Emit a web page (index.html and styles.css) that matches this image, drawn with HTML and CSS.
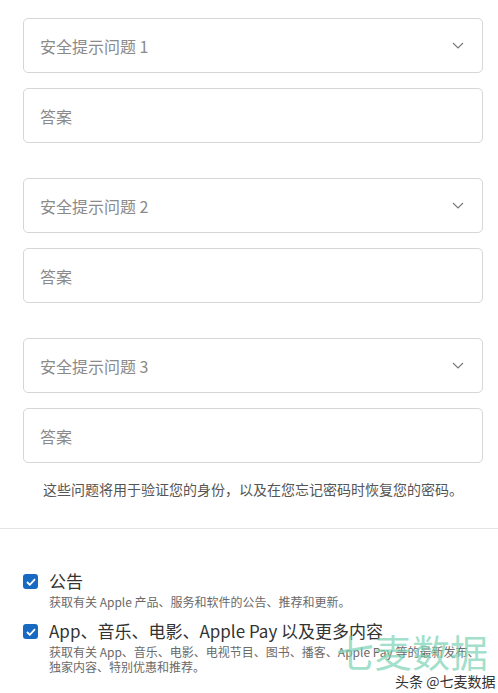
FILE: index.html
```html
<!DOCTYPE html>
<html lang="zh-CN">
<head>
<meta charset="utf-8">
<link rel="stylesheet" href="styles.css">
</head>
<body>
<div class="page">
  <section class="questions">
    <div class="group">
      <div class="field select"><span class="ph">安全提示问题 1</span><svg class="chev" width="12" height="7" viewBox="0 0 12 7"><path d="M1 1l5 5 5-5" fill="none" stroke="#7a7a7a" stroke-width="1.2"/></svg></div>
      <div class="field"><span class="ph">答案</span></div>
    </div>
    <div class="group">
      <div class="field select"><span class="ph">安全提示问题 2</span><svg class="chev" width="12" height="7" viewBox="0 0 12 7"><path d="M1 1l5 5 5-5" fill="none" stroke="#7a7a7a" stroke-width="1.2"/></svg></div>
      <div class="field"><span class="ph">答案</span></div>
    </div>
    <div class="group">
      <div class="field select"><span class="ph">安全提示问题 3</span><svg class="chev" width="12" height="7" viewBox="0 0 12 7"><path d="M1 1l5 5 5-5" fill="none" stroke="#7a7a7a" stroke-width="1.2"/></svg></div>
      <div class="field"><span class="ph">答案</span></div>
    </div>
    <p class="help">这些问题将用于验证您的身份，以及在您忘记密码时恢复您的密码。</p>
  </section>
  <hr class="divider">
  <section class="prefs">
    <div class="pref">
      <span class="box"><svg width="10" height="8" viewBox="0 0 10 8"><path d="M1 4l2.8 2.8L9 1.2" fill="none" stroke="#fff" stroke-width="1.8"/></svg></span>
      <div class="pref-text">
        <div class="pref-title">公告</div>
        <div class="pref-desc">获取有关 Apple 产品、服务和软件的公告、推荐和更新。</div>
      </div>
    </div>
    <div class="pref">
      <span class="box"><svg width="10" height="8" viewBox="0 0 10 8"><path d="M1 4l2.8 2.8L9 1.2" fill="none" stroke="#fff" stroke-width="1.8"/></svg></span>
      <div class="pref-text">
        <div class="pref-title">App、音乐、电影、Apple Pay 以及更多内容</div>
        <div class="pref-desc">获取有关 App、音乐、电影、电视节目、图书、播客、Apple Pay 等的最新发布、独家内容、特别优惠和推荐。</div>
      </div>
    </div>
  </section>
  <div class="wm-big">七麦数据</div>
  <div class="wm-small">头条 @七麦数据</div>
</div>
</body>
</html>
```
FILE: styles.css
```css
* { box-sizing: border-box; }
html, body { margin: 0; padding: 0; background: #fff; }
body {
  font-family: "Noto Sans CJK SC", "Noto Sans", sans-serif;
  color: #1d1d1f;
  width: 498px;
  height: 693px;
  overflow: hidden;
}
.page { position: relative; height: 693px; }
.questions { padding: 18px 15px 0 23px; }
.group { display: flex; flex-direction: column; gap: 15px; margin-bottom: 35px; }
.group:nth-child(3) { margin-bottom: 15px; }
.field {
  height: 55px;
  border: 1px solid #d6d6d6;
  border-radius: 5px;
  display: flex;
  align-items: center;
  padding: 0 18px 0 16px;
  justify-content: space-between;
}
.ph { font-size: 16px; color: #8a8a8a; line-height: 1; }
.help {
  margin: 0;
  font-size: 14px;
  color: #555;
  text-align: center;
  line-height: 20px;
  padding: 1px 0 0 0;
}
.divider { border: 0; border-top: 1px solid #e4e4e4; margin: 29px 0 0 0; }
.prefs { padding: 42px 15px 0 23px; display: flex; flex-direction: column; gap: 12px; }
.pref { display: flex; gap: 11px; align-items: flex-start; }
.box {
  width: 15px; height: 15px;
  flex: none;
  margin-top: 3px;
  background: #1769c2;
  border-radius: 3px;
  display: flex; align-items: center; justify-content: center;
}
.pref-title { font-size: 17px; line-height: 20px; color: #333; }
.pref-desc { font-size: 12px; line-height: 15px; color: #6a6a6a; margin-top: 3px; }
.wm-big {
  position: absolute;
  left: 336px; top: 628px;
  font-size: 38px;
  color: rgba(120, 210, 180, 0.7);
  line-height: 1.2;
}
.wm-small {
  position: absolute;
  left: 395px; top: 671px;
  font-size: 14px;
  color: #333;
  text-shadow: 0 0 2px #fff, 0 0 2px #fff;
  line-height: 20px;
}
```
